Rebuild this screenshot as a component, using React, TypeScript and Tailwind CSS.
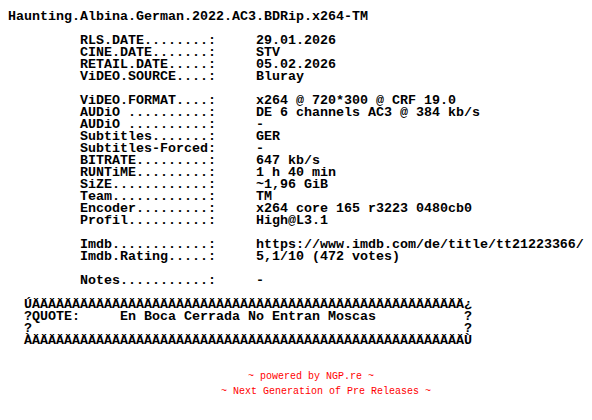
const fields: [string, string][] = [
  ['RLS.DATE........:', '29.01.2026'],
  ['CINE.DATE.......:', 'STV'],
  ['RETAIL.DATE.....:', '05.02.2026'],
  ['ViDEO.SOURCE....:', 'Bluray'],
  ['', ''],
  ['ViDEO.FORMAT....:', 'x264 @ 720*300 @ CRF 19.0'],
  ['AUDiO ..........:', 'DE 6 channels AC3 @ 384 kb/s'],
  ['AUDiO ..........:', '-'],
  ['Subtitles.......:', 'GER'],
  ['Subtitles-Forced:', '-'],
  ['BITRATE.........:', '647 kb/s'],
  ['RUNTiME.........:', '1 h 40 min'],
  ['SiZE............:', '~1,96 GiB'],
  ['Team............:', 'TM'],
  ['Encoder.........:', 'x264 core 165 r3223 0480cb0'],
  ['Profil..........:', 'High@L3.1'],
  ['', ''],
  ['Imdb............:', 'https://www.imdb.com/de/title/tt21223366/'],
  ['Imdb.Rating.....:', '5,1/10 (472 votes)'],
  ['', ''],
  ['Notes...........:', '-'],
]

const indent = '         '
const gap = '     '
const dash = 'Ä'.repeat(54)

const lines = [
  'Haunting.Albina.German.2022.AC3.BDRip.x264-TM',
  '',
  ...fields.map(([k, v]) => (k ? indent + k + gap + v : '')),
  '',
  '  Ú' + dash + '¿',
  '  ?QUOTE:     En Boca Cerrada No Entran Moscas           ?',
  '  ?' + ' '.repeat(54) + '?',
  '  À' + dash + 'Ù',
]

export default function App() {
  return (
    <div className="w-[592px] h-[420px] bg-white overflow-hidden">
      <pre className="pt-[11px] pl-[8px] font-['Liberation_Mono',monospace] font-bold text-[13.333px] leading-[12px] text-black whitespace-pre">
        {lines.join('\n')}
      </pre>
      <div className="mt-[22px] font-['Liberation_Mono',monospace] text-[10px] leading-[15px] text-[#ff0000] whitespace-pre">
        <div className="pl-[248px]">~ powered by NGP.re ~</div>
        <div className="pl-[221px]">~ Next Generation of Pre Releases ~</div>
      </div>
    </div>
  )
}
